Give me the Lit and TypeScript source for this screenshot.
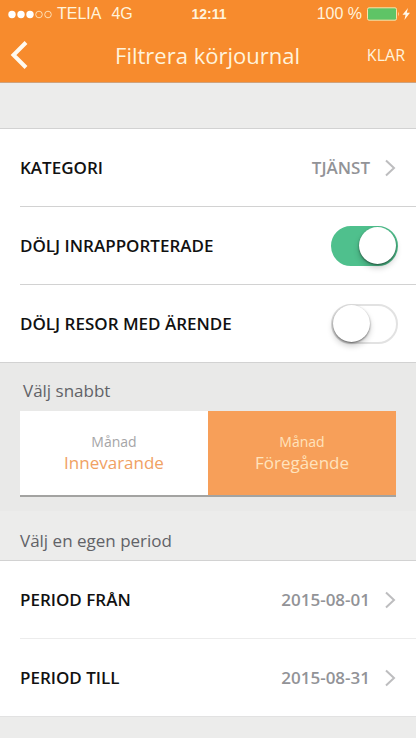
import { LitElement, html, css, svg } from "lit";
import { customElement, property, state } from "lit/decorators.js";
import { classMap } from "lit/directives/class-map.js";

const chevron = html`<svg class="chevron" viewBox="0 0 12 18" width="12" height="18" aria-hidden="true">
  <path d="M2 1.5 L10 9 L2 16.5" fill="none" stroke="#bdbdbf" stroke-width="2" />
</svg>`;

const signalDots = [0, 1, 2, 3, 4].map(
  (i) =>
    svg`<circle cx=${4 + i * 9} cy="4.5" r=${i < 3 ? 3.7 : 3.3}
      fill=${i < 3 ? "#fff" : "none"} stroke=${i < 3 ? "none" : "#ffe6c0"} stroke-width="0.9" />`
);

@customElement("status-bar")
export class StatusBar extends LitElement {
  static styles = css`
    :host {
      display: grid;
      grid-template-columns: 1fr auto 1fr;
      align-items: center;
      height: 28px;
      padding: 0 6px 0 8px;
      font: 16px/20px "Liberation Sans", Arial, sans-serif;
      color: #fff3dc;
    }
    .side {
      display: flex;
      align-items: center;
    }
    .carrier {
      margin: 0 10px 0 5px;
    }
    .clock {
      font-size: 14px;
      font-weight: 700;
    }
    .end {
      justify-content: flex-end;
      gap: 5px;
    }
  `;

  render() {
    return html`
      <div class="side">
        <svg width="44" height="9" viewBox="0 0 44 9" aria-hidden="true">${signalDots}</svg>
        <span class="carrier">TELIA</span>
        <span>4G</span>
      </div>
      <span class="clock">12:11</span>
      <div class="side end">
        <span>100 %</span>
        <svg width="43" height="14" viewBox="0 0 43 14" aria-hidden="true">
          <rect x="0.5" y="0.8" width="29" height="12.4" rx="1.5" fill="#5fc466" stroke="#ffe0a8" />
          <path d="M31 4.5 Q32.8 7 31 9.5 Z" fill="#ffe0a8" />
          <path d="M41 1 L35.5 7.8 H38.6 L37.4 13 L43 5.8 H39.8 Z" fill="#fff8ea" />
        </svg>
      </div>
    `;
  }
}

@customElement("toggle-row")
export class ToggleRow extends LitElement {
  @property() label = "";
  @property({ type: Boolean }) checked = false;

  static styles = css`
    :host {
      display: block;
    }
    .row {
      display: flex;
      align-items: center;
      justify-content: space-between;
      height: 77px;
      padding-right: 18px;
    }
    .switch {
      appearance: none;
      display: flex;
      align-items: center;
      box-sizing: border-box;
      width: 67px;
      height: 40px;
      margin: 0;
      padding: 0;
      border: 2px solid #e2e2e2;
      border-radius: 20px;
      background: #fff;
    }
    .switch::before {
      content: "";
      width: 37px;
      height: 37px;
      border-radius: 50%;
      background: #fff;
      box-shadow: 0 1px 2px rgba(0, 0, 0, 0.5), 0 4px 6px rgba(0, 0, 0, 0.2);
    }
    .switch:checked {
      justify-content: flex-end;
      border-color: #4fc08d;
      background: #4fc08d;
    }
  `;

  private onChange(event: Event) {
    this.checked = (event.target as HTMLInputElement).checked;
  }

  render() {
    return html`<label class="row">
      <span>${this.label}</span>
      <input class="switch" type="checkbox" role="switch" .checked=${this.checked} @change=${this.onChange} />
    </label>`;
  }
}

@customElement("value-row")
export class ValueRow extends LitElement {
  @property() label = "";
  @property() value = "";

  static styles = css`
    :host {
      display: block;
    }
    .row {
      display: flex;
      align-items: center;
      width: 100%;
      height: 77px;
      padding: 0 20px 0 0;
      border: 0;
      background: none;
      font: inherit;
      color: inherit;
      text-align: left;
    }
    .value {
      margin-left: auto;
      margin-right: 14px;
      color: #929397;
    }
    .chevron {
      display: block;
    }
  `;

  render() {
    return html`<button class="row" type="button">
      <span>${this.label}</span>
      <span class="value">${this.value}</span>
      ${chevron}
    </button>`;
  }
}

@customElement("app-root")
export class AppRoot extends LitElement {
  @state() private selected = 1;

  private periods = ["Innevarande", "Föregående"];

  static styles = css`
    :host {
      display: block;
      min-height: 100vh;
      background: #ececeb;
      font-family: "Open Sans", "Noto Sans", sans-serif;
    }
    .header {
      background: #f78b2d;
      border-bottom: 1px solid #cfa27c;
      color: #fff3dc;
    }
    .nav {
      display: grid;
      grid-template-columns: 1fr auto 1fr;
      align-items: center;
      height: 54px;
      padding: 0 11px 0 10px;
    }
    .back,
    .done {
      padding: 0;
      border: 0;
      background: none;
      color: inherit;
      font: 16px/24px "Open Sans", "Noto Sans", sans-serif;
    }
    .back {
      justify-self: start;
    }
    .back svg {
      display: block;
    }
    .done {
      justify-self: end;
    }
    .title {
      margin: 0;
      font-size: 22px;
      line-height: 28px;
      font-weight: 400;
    }
    .list {
      padding-left: 20px;
      border: solid #d2d2d2;
      border-width: 1px 0;
      background: #fff;
      color: #111;
      font-size: 17px;
      line-height: 24px;
      font-weight: 600;
    }
    .filters {
      margin-top: 45px;
    }
    .list > * + * {
      border-top: 1px solid #d2d2d2;
    }
    .dates > * + * {
      border-top-color: #ececec;
    }
    .dates {
      border-bottom-color: #e2e2e2;
    }
    .quick {
      padding: 16px 20px 14px;
      background: #e9e9e8;
    }
    .caption {
      margin: 0;
      font-size: 17px;
      line-height: 24px;
      font-weight: 400;
      color: #616267;
    }
    .quick .caption {
      padding-left: 3px;
    }
    .segments {
      display: grid;
      grid-template-columns: 1fr 1fr;
      margin-top: 8px;
      border-bottom: 2px solid #a3a3a1;
    }
    .segment {
      display: flex;
      flex-direction: column;
      align-items: center;
      justify-content: center;
      height: 84px;
      padding: 0;
      border: 0;
      background: #fff;
      color: #f0a163;
      font: 17px/22px "Open Sans", "Noto Sans", sans-serif;
    }
    .unit {
      font-size: 14px;
      line-height: 20px;
      color: #a5a5a7;
    }
    .active,
    .active .unit {
      background: #f79f59;
      color: #ffe3bd;
    }
    .period {
      padding: 18px 20px 7px;
    }
  `;

  render() {
    return html`
      <header class="header">
        <status-bar></status-bar>
        <div class="nav">
          <button class="back" type="button" aria-label="Tillbaka">
            <svg width="18" height="28" viewBox="0 0 18 28" aria-hidden="true">
              <path d="M16 1.5 L3.5 14 L16 26.5" fill="none" stroke="#fffaf0" stroke-width="4" />
            </svg>
          </button>
          <h1 class="title">Filtrera körjournal</h1>
          <button class="done" type="button">KLAR</button>
        </div>
      </header>
      <main>
        <section class="list filters">
          <value-row label="KATEGORI" value="TJÄNST"></value-row>
          <toggle-row label="DÖLJ INRAPPORTERADE" checked></toggle-row>
          <toggle-row label="DÖLJ RESOR MED ÄRENDE"></toggle-row>
        </section>
        <section class="quick">
          <h2 class="caption">Välj snabbt</h2>
          <div class="segments">
            ${this.periods.map(
              (name, i) => html`<button
                type="button"
                class=${classMap({ segment: true, active: i === this.selected })}
                aria-pressed=${i === this.selected ? "true" : "false"}
                @click=${() => (this.selected = i)}
              >
                <span class="unit">Månad</span>
                <span>${name}</span>
              </button>`
            )}
          </div>
        </section>
        <section>
          <h2 class="caption period">Välj en egen period</h2>
          <div class="list dates">
            <value-row label="PERIOD FRÅN" value="2015-08-01"></value-row>
            <value-row label="PERIOD TILL" value="2015-08-31"></value-row>
          </div>
        </section>
      </main>
    `;
  }
}
